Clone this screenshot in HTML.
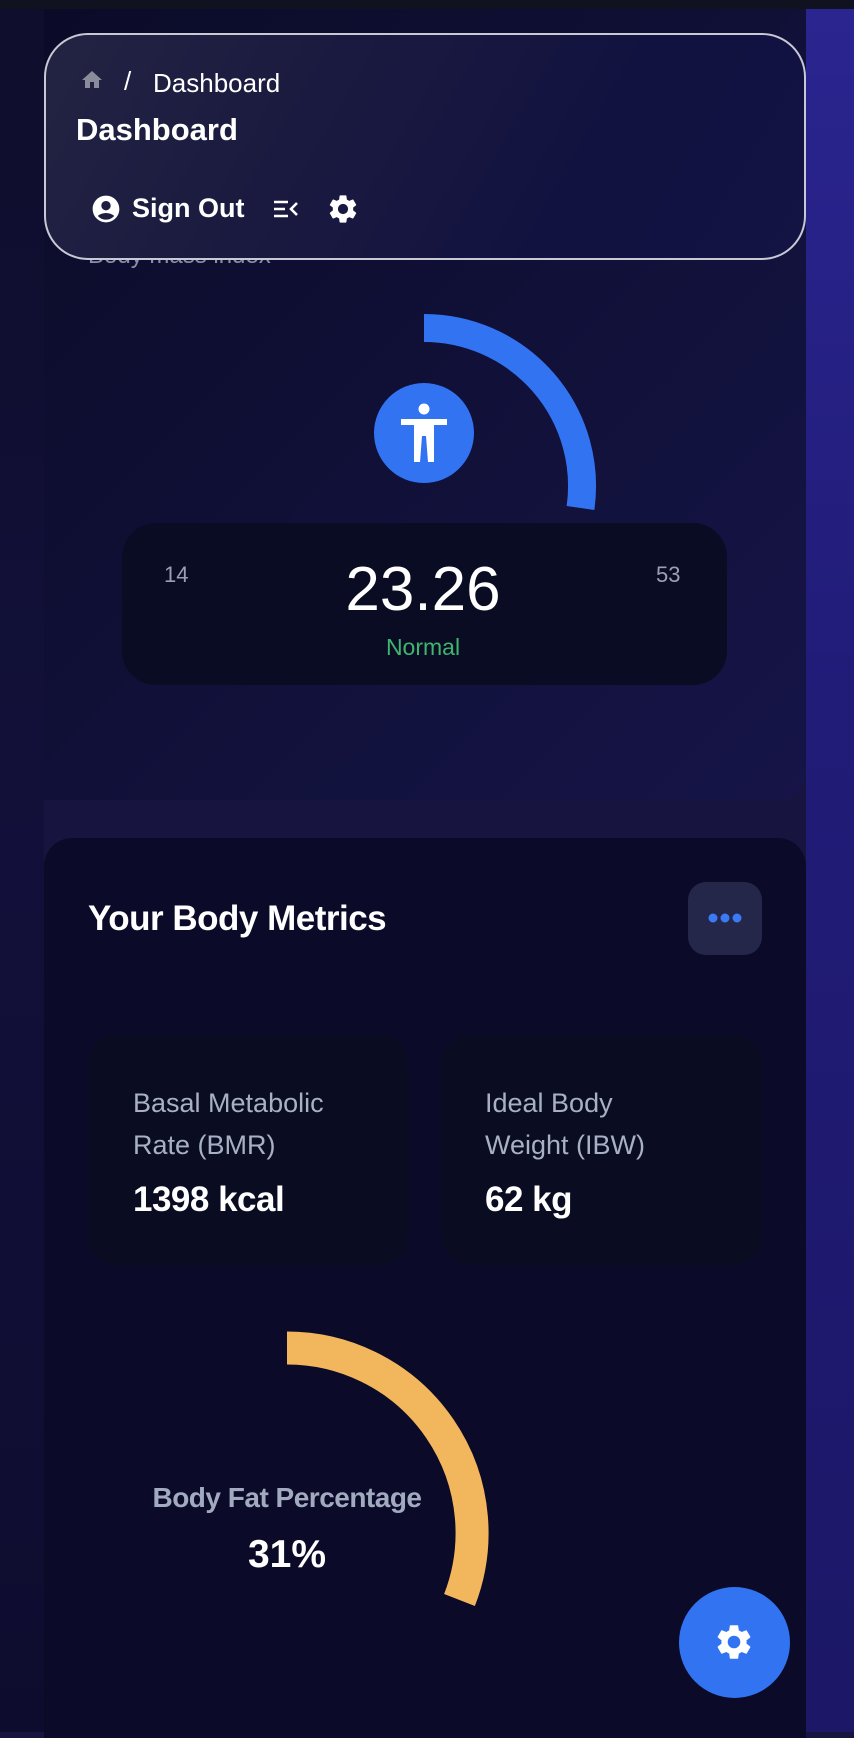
<!DOCTYPE html>
<html><head><meta charset="utf-8"><style>
*{margin:0;padding:0;box-sizing:border-box}
body{width:854px;height:1732px;overflow:hidden;background:#171540;font-family:"Liberation Sans",sans-serif;color:#fff;position:relative}
.lstrip{position:absolute;left:0;top:0;width:44px;height:1732px;background:linear-gradient(180deg,#0f0e2c,#12103a 50%,#0e0c2e)}
.rstrip{position:absolute;left:806px;top:0;width:48px;height:1732px;background:linear-gradient(180deg,#2a2590,#211c78 40%,#1c1766 100%)}
.topbar{position:absolute;left:0;top:0;width:854px;height:9px;background:#111220}
.card1{position:absolute;left:44px;top:0;width:762px;height:800px;border-radius:0 0 28px 0;background:linear-gradient(135deg,#0b0b28,#12123e 70%,#161448)}
.card2{position:absolute;left:44px;top:838px;width:762px;height:900px;border-radius:28px 28px 0 0;background:#0b0b29}
.glass{position:absolute;left:44px;top:33px;width:762px;height:227px;border-radius:44px;border:2px solid #c9c9d6;background:linear-gradient(120deg,#232343 0%,#1a1a40 35%,#121240 70%,#131344);}
.t{position:absolute;white-space:nowrap}
.box{position:absolute;background:#0a0c22;border-radius:30px}
</style></head><body>
<div class="lstrip"></div><div class="rstrip"></div>
<div class="card1"></div>
<div class="topbar"></div>
<div class="t" style="left:88px;top:242px;font-size:24px;color:#8a8fa8">Body mass index</div>
<div class="glass"></div>
<svg class="t" style="left:79px;top:68px" width="26" height="24" viewBox="0 0 24 24"><path d="M10 20v-6h4v6h5v-8h3L12 3 2 12h3v8z" fill="#8a8c9c"/></svg>
<div class="t" style="left:124px;top:66px;font-size:26px">/</div>
<div class="t" style="left:153px;top:68px;font-size:26px">Dashboard</div>
<div class="t" style="left:76px;top:112px;font-size:31px;font-weight:bold">Dashboard</div>
<svg class="t" style="left:90px;top:193px" width="32" height="32" viewBox="0 0 24 24"><path fill="#fff" d="M12 2C6.48 2 2 6.48 2 12s4.48 10 10 10 10-4.48 10-10S17.52 2 12 2zm0 4c1.93 0 3.5 1.57 3.5 3.5S13.93 13 12 13s-3.5-1.57-3.5-3.5S10.07 6 12 6zm0 14c-2.03 0-4.43-.82-6.14-2.88C7.55 15.8 9.68 15 12 15s4.45.8 6.14 2.12C16.43 19.18 14.03 20 12 20z"/></svg>
<div class="t" style="left:132px;top:193px;font-size:27px;font-weight:bold">Sign Out</div>
<svg class="t" style="left:272px;top:196px" width="28" height="26" viewBox="0 0 28 26"><path d="M2 6h14M2 13h11M2 20h14M25 7l-6 6 6 6" stroke="#fff" stroke-width="2.6" fill="none"/></svg>
<svg class="t" style="left:326px;top:192px" width="34" height="34" viewBox="0 0 24 24"><path fill="#fff" d="M19.14 12.94c.04-.3.06-.61.06-.94s-.02-.64-.07-.94l2.03-1.58a.49.49 0 00.12-.61l-1.92-3.32a.49.49 0 00-.59-.22l-2.39.96c-.5-.38-1.03-.7-1.62-.94l-.36-2.54a.48.48 0 00-.48-.41h-3.84a.48.48 0 00-.47.41l-.36 2.54c-.59.24-1.13.57-1.62.94l-2.39-.96a.49.49 0 00-.59.22L2.74 8.87a.48.48 0 00.12.61l2.03 1.58c-.05.3-.09.63-.09.94s.02.64.07.94l-2.03 1.58a.49.49 0 00-.12.61l1.92 3.32c.12.22.37.29.59.22l2.39-.96c.5.38 1.03.7 1.62.94l.36 2.54c.05.24.24.41.48.41h3.84c.24 0 .44-.17.47-.41l.36-2.54c.59-.24 1.13-.56 1.62-.94l2.39.96c.22.08.47 0 .59-.22l1.92-3.32a.48.48 0 00-.12-.61l-2.01-1.58zM12 15.6A3.6 3.6 0 1112 8.4a3.6 3.6 0 010 7.2z"/></svg>

<svg class="t" style="left:0;top:0" width="854" height="800"><path d="M424 328 A158 158 0 0 1 580.5 508" stroke="#3273f2" stroke-width="28" fill="none"/>
<circle cx="424" cy="433" r="50" fill="#3273f2"/>
<circle cx="424" cy="409" r="5.5" fill="#fff"/>
<path d="M401 419h46v6h-13v37h-6l-2-26h-4l-2 26h-6v-37h-13z" fill="#fff"/></svg>
<div class="box" style="left:122px;top:523px;width:605px;height:162px;border-radius:34px;background:#0a0c24"></div>
<div class="t" style="left:164px;top:562px;font-size:22px;color:#9aa0b4">14</div>
<div class="t" style="left:656px;top:562px;font-size:22px;color:#9aa0b4">53</div>
<div class="t" style="left:323px;top:554px;width:200px;text-align:center;font-size:62px">23.26</div>
<div class="t" style="left:323px;top:634px;width:200px;text-align:center;font-size:23px;color:#3fb56d">Normal</div>

<div class="card2"></div>
<div class="t" style="left:88px;top:899px;font-size:35px;font-weight:bold;letter-spacing:-0.5px">Your Body Metrics</div>
<div class="box" style="left:688px;top:882px;width:74px;height:73px;border-radius:18px;background:#24274a"></div>
<svg class="t" style="left:706px;top:910px" width="38" height="16"><circle cx="7" cy="8" r="4.5" fill="#3a7af5"/><circle cx="19" cy="8" r="4.5" fill="#3a7af5"/><circle cx="31" cy="8" r="4.5" fill="#3a7af5"/></svg>
<div class="box" style="left:88px;top:1035px;width:321px;height:230px"></div>
<div class="box" style="left:441px;top:1035px;width:321px;height:230px"></div>
<div class="t" style="left:133px;top:1082px;font-size:27px;line-height:42px;color:#a8b0c6">Basal Metabolic<br>Rate (BMR)</div>
<div class="t" style="left:133px;top:1180px;font-size:35px;font-weight:bold;letter-spacing:-0.5px">1398 kcal</div>
<div class="t" style="left:485px;top:1082px;font-size:27px;line-height:42px;color:#a8b0c6">Ideal Body<br>Weight (IBW)</div>
<div class="t" style="left:485px;top:1180px;font-size:35px;font-weight:bold;letter-spacing:-0.5px">62 kg</div>

<svg class="t" style="left:0;top:1300px" width="854" height="432"><path d="M287 48 A185 185 0 0 1 459.5 300" stroke="#f2b75c" stroke-width="33" fill="none"/></svg>
<div class="t" style="left:127px;top:1482px;width:320px;text-align:center;font-size:28px;font-weight:bold;color:#a2aabf;letter-spacing:-0.5px">Body Fat Percentage</div>
<div class="t" style="left:187px;top:1533px;width:200px;text-align:center;font-size:39px;font-weight:bold">31%</div>

<div class="t" style="left:679px;top:1587px;width:111px;height:111px;border-radius:50%;background:#3273f2"></div>
<svg class="t" style="left:713px;top:1621px" width="42" height="42" viewBox="0 0 24 24"><path fill="#fff" d="M19.14 12.94c.04-.3.06-.61.06-.94s-.02-.64-.07-.94l2.03-1.58a.49.49 0 00.12-.61l-1.92-3.32a.49.49 0 00-.59-.22l-2.39.96c-.5-.38-1.03-.7-1.62-.94l-.36-2.54a.48.48 0 00-.48-.41h-3.84a.48.48 0 00-.47.41l-.36 2.54c-.59.24-1.13.57-1.62.94l-2.39-.96a.49.49 0 00-.59.22L2.74 8.87a.48.48 0 00.12.61l2.03 1.58c-.05.3-.09.63-.09.94s.02.64.07.94l-2.03 1.58a.49.49 0 00-.12.61l1.92 3.32c.12.22.37.29.59.22l2.39-.96c.5.38 1.03.7 1.62.94l.36 2.54c.05.24.24.41.48.41h3.84c.24 0 .44-.17.47-.41l.36-2.54c.59-.24 1.13-.56 1.62-.94l2.39.96c.22.08.47 0 .59-.22l1.92-3.32a.48.48 0 00-.12-.61l-2.01-1.58zM12 15.6A3.6 3.6 0 1112 8.4a3.6 3.6 0 010 7.2z"/></svg>
</body></html>
